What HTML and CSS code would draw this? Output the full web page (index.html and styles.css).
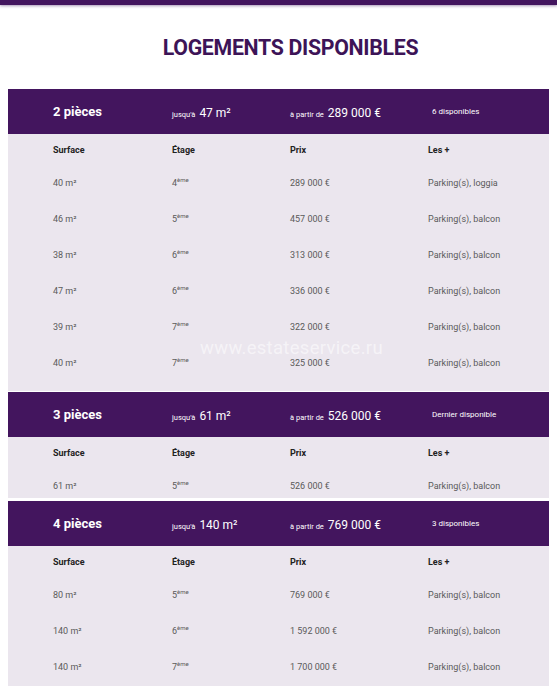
FILE: index.html
```html
<!DOCTYPE html>
<html lang="fr">
<head>
<meta charset="utf-8">
<title>Logements disponibles</title>
<link rel="stylesheet" href="styles.css">
</head>
<body>
<div class="topbar"></div>
<main class="page">
  <h1 class="title">LOGEMENTS DISPONIBLES</h1>
  <div class="list">
    <section class="lot">
      <div class="lot-head">
        <div class="lot-name">2 pièces</div>
        <div class="lot-meta"><span class="small">jusqu'à</span> <span class="big">47 m²</span></div>
        <div class="lot-meta"><span class="small">à partir de</span> <span class="big">289 000 €</span></div>
        <div class="lot-avail">6 disponibles</div>
      </div>
      <div class="lot-body lot-body--a">
        <div class="row row--label"><span>Surface</span><span>Étage</span><span>Prix</span><span>Les +</span></div>
        <div class="row"><span>40 m²</span><span>4<sup>ème</sup></span><span>289 000 €</span><span>Parking(s), loggia</span></div>
        <div class="row"><span>46 m²</span><span>5<sup>ème</sup></span><span>457 000 €</span><span>Parking(s), balcon</span></div>
        <div class="row"><span>38 m²</span><span>6<sup>ème</sup></span><span>313 000 €</span><span>Parking(s), balcon</span></div>
        <div class="row"><span>47 m²</span><span>6<sup>ème</sup></span><span>336 000 €</span><span>Parking(s), balcon</span></div>
        <div class="row"><span>39 m²</span><span>7<sup>ème</sup></span><span>322 000 €</span><span>Parking(s), balcon</span></div>
        <div class="row"><span>40 m²</span><span>7<sup>ème</sup></span><span>325 000 €</span><span>Parking(s), balcon</span></div>
        <div class="watermark">www.estateservice.ru</div>
      </div>
    </section>
    <section class="lot lot--b">
      <div class="lot-head">
        <div class="lot-name">3 pièces</div>
        <div class="lot-meta"><span class="small">jusqu'à</span> <span class="big">61 m²</span></div>
        <div class="lot-meta"><span class="small">à partir de</span> <span class="big">526 000 €</span></div>
        <div class="lot-avail">Dernier disponible</div>
      </div>
      <div class="lot-body lot-body--b">
        <div class="row row--label"><span>Surface</span><span>Étage</span><span>Prix</span><span>Les +</span></div>
        <div class="row"><span>61 m²</span><span>5<sup>ème</sup></span><span>526 000 €</span><span>Parking(s), balcon</span></div>
      </div>
    </section>
    <section class="lot lot--c">
      <div class="lot-head">
        <div class="lot-name">4 pièces</div>
        <div class="lot-meta"><span class="small">jusqu'à</span> <span class="big">140 m²</span></div>
        <div class="lot-meta"><span class="small">à partir de</span> <span class="big">769 000 €</span></div>
        <div class="lot-avail">3 disponibles</div>
      </div>
      <div class="lot-body lot-body--c">
        <div class="row row--label"><span>Surface</span><span>Étage</span><span>Prix</span><span>Les +</span></div>
        <div class="row"><span>80 m²</span><span>5<sup>ème</sup></span><span>769 000 €</span><span>Parking(s), balcon</span></div>
        <div class="row"><span>140 m²</span><span>6<sup>ème</sup></span><span>1 592 000 €</span><span>Parking(s), balcon</span></div>
        <div class="row"><span>140 m²</span><span>7<sup>ème</sup></span><span>1 700 000 €</span><span>Parking(s), balcon</span></div>
      </div>
    </section>
  </div>
</main>
</body>
</html>
```
FILE: styles.css
```css
* { box-sizing: border-box; }
html, body { margin: 0; padding: 0; background: #ffffff; }
body { font-family: Roboto, "Liberation Sans", Arial, sans-serif; color: #333; }

.topbar {
  height: 5px;
  background: #43155e;
  box-shadow: 0 1px 3px rgba(60, 20, 90, 0.45);
}

.page { padding: 0 8px; }

.title {
  margin: 31px 0 29px;
  padding-left: 24px;
  font-size: 21.3px;
  line-height: 24px;
  font-weight: 700;
  text-align: center;
  color: #3d1457;
  letter-spacing: -0.3px;
}

.list { display: flex; flex-direction: column; }
.lot--b { margin-top: 1px; }
.lot--c { margin-top: 3px; }

.lot-head {
  display: grid;
  grid-template-columns: 119px 118px 140px 1fr;
  align-items: center;
  height: 45px;
  padding-left: 45px;
  background: #43155e;
  color: #ffffff;
}
.lot-name { font-size: 13px; font-weight: 700; }
.lot-meta { white-space: nowrap; }
.lot-meta .small { font-size: 7.5px; }
.lot-meta .big { font-size: 12px; font-weight: 400; }
.lot-avail { font-size: 8px; padding-left: 2px; }

.lot-body {
  position: relative;
  display: flex;
  flex-direction: column;
  gap: 7px;
  padding: 3px 0 19px 45px;
  background: #ebe6ee;
}
.lot-body--b { padding-bottom: 3px; }
.lot-body--c { padding-bottom: 10px; }

.row {
  display: grid;
  grid-template-columns: 119px 118px 138px 1fr;
  padding-top: 11px;
  font-size: 9px;
  line-height: 18px;
  color: #5a5a5a;
}
.row--label {
  padding-top: 0;
  line-height: 26px;
  margin-bottom: -7px;
  font-weight: 700;
  color: #222;
}
.row sup { font-size: 6px; line-height: 0; vertical-align: 4px; }

.watermark {
  position: absolute;
  left: 192px;
  top: 203px;
  font-size: 18.5px;
  letter-spacing: 0.3px;
  color: rgba(255, 255, 255, 0.55);
  pointer-events: none;
}
```
